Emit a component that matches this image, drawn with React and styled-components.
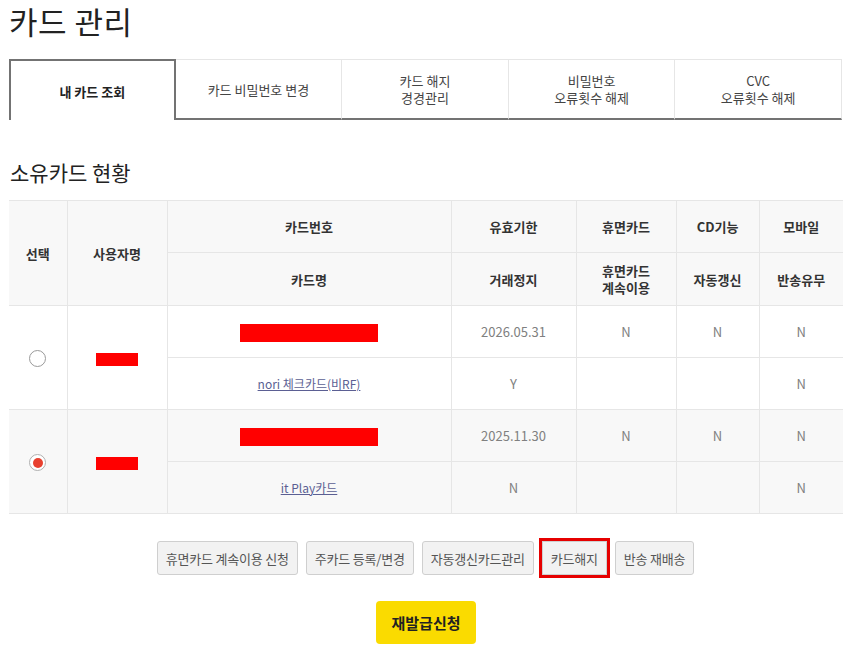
import React from "react";
import styled, { createGlobalStyle } from "styled-components";

const Global = createGlobalStyle`
  html, body { margin: 0; padding: 0; background: #fff; }
  body { font-family: "Noto Sans CJK KR", "Noto Sans", sans-serif; color: #333; }
  * { box-sizing: border-box; }
`;

const Page = styled.div`
  width: 843px;
  padding: 0 1px 0 9px;
`;

const Title = styled.h1`
  margin: 0;
  font-size: 31px;
  line-height: 44px;
  margin-top: -1px;
  font-weight: 400;
  color: #222;
  letter-spacing: 0.5px;
`;

const Tabs = styled.div`
  display: grid;
  grid-template-columns: repeat(5, 1fr);
  margin-top: 16px;
  height: 61px;
`;

const Tab = styled.div`
  display: flex;
  align-items: center;
  justify-content: center;
  text-align: center;
  font-size: 13px;
  line-height: 17px;
  color: ${(p) => (p.$active ? "#222" : "#444")};
  font-weight: ${(p) => (p.$active ? 700 : 400)};
  background: #fff;
  border-top: ${(p) => (p.$active ? "2px solid #737373" : "1px solid #e6e6e6")};
  border-left: ${(p) => (p.$active ? "2px solid #737373" : "none")};
  border-right: ${(p) => (p.$active ? "2px solid #737373" : "1px solid #e6e6e6")};
  border-bottom: ${(p) => (p.$active ? "none" : "2px solid #737373")};
  padding-top: ${(p) => (p.$active ? "2px" : "0")};
`;

const SectionTitle = styled.h2`
  margin: 37px 0 0 1px;
  font-size: 21px;
  line-height: 30px;
  font-weight: 400;
  color: #222;
`;

const Table = styled.table`
  margin-top: 13px;
  width: 834px;
  border-collapse: collapse;
  table-layout: fixed;
  font-size: 13px;
`;

const Th = styled.th`
  background: #f8f8f8;
  border: 1px solid #e6e6e6;
  border-left: ${(p) => (p.$first ? "none" : "1px solid #e6e6e6")};
  border-right: ${(p) => (p.$last ? "none" : "1px solid #e6e6e6")};
  height: ${(p) => p.$h || 52}px;
  font-weight: 700;
  color: #333;
  line-height: 17px;
  padding: 0;
  text-align: center;
`;

const Tr = styled.tr`
  background: ${(p) => (p.$selected ? "#f8f8f8" : "#fff")};
`;

const Td = styled.td`
  border: 1px solid #e6e6e6;
  border-left: ${(p) => (p.$first ? "none" : "1px solid #e6e6e6")};
  border-right: ${(p) => (p.$last ? "none" : "1px solid #e6e6e6")};
  height: 52px;
  text-align: center;
  color: #808080;
  padding: 0;
  font-size: 13px;
`;

const Redact = styled.span`
  display: inline-block;
  vertical-align: middle;
  width: ${(p) => p.$w}px;
  height: ${(p) => p.$h}px;
  background: #ff0000;
`;

const Radio = styled.span`
  display: inline-flex;
  align-items: center;
  justify-content: center;
  width: 17px;
  height: 17px;
  border-radius: 50%;
  border: 1px solid ${(p) => (p.$checked ? "#b0b0b0" : "#9a9a9a")};
  background: #fff;
  vertical-align: middle;
  &::after {
    content: "";
    display: ${(p) => (p.$checked ? "block" : "none")};
    width: 10px;
    height: 10px;
    border-radius: 50%;
    background: #e8402f;
  }
`;

const CardLink = styled.a`
  color: #5b5f93;
  text-decoration: underline;
  font-size: 12px;
  cursor: pointer;
`;

const ButtonRow = styled.div`
  display: flex;
  justify-content: center;
  align-items: center;
  gap: 8px;
  margin-top: 27px;
`;

const GreyButton = styled.button`
  height: 34px;
  padding: 0 8px;
  font-family: inherit;
  font-size: 13px;
  letter-spacing: -0.2px;
  color: #555;
  background: #f2f2f2;
  border: 1px solid #cfcfcf;
  border-radius: ${(p) => (p.$marked ? "0" : "3px")};
  outline: ${(p) => (p.$marked ? "3px solid #e60000" : "none")};
  cursor: pointer;
`;

const PrimaryRow = styled.div`
  display: flex;
  justify-content: center;
  margin-top: 26px;
  padding-left: 1px;
`;

const PrimaryButton = styled.button`
  width: 100px;
  height: 43px;
  background: #fadb00;
  border: none;
  border-radius: 4px;
  font-family: inherit;
  font-size: 15px;
  font-weight: 700;
  color: #222;
  cursor: pointer;
`;

const tabs = [
  ["내 카드 조회"],
  ["카드 비밀번호 변경"],
  ["카드 해지", "경경관리"],
  ["비밀번호", "오류횟수 해제"],
  ["CVC", "오류횟수 해제"],
];

const cards = [
  { exp: "2026.05.31", name: "nori 체크카드(비RF)", stop: "Y", selected: false },
  { exp: "2025.11.30", name: "it Play카드", stop: "N", selected: true },
];

export default function App() {
  return (
    <>
      <Global />
      <Page>
        <Title>카드 관리</Title>
        <Tabs>
          {tabs.map((t, i) => (
            <Tab key={i} $active={i === 0}>
              <div>
                {t.map((line, j) => (
                  <div key={j}>{line}</div>
                ))}
              </div>
            </Tab>
          ))}
        </Tabs>

        <SectionTitle>소유카드 현황</SectionTitle>

        <Table>
          <colgroup>
            <col style={{ width: 58 }} />
            <col style={{ width: 100 }} />
            <col style={{ width: 284 }} />
            <col style={{ width: 125 }} />
            <col style={{ width: 100 }} />
            <col style={{ width: 83 }} />
            <col style={{ width: 84 }} />
          </colgroup>
          <thead>
            <tr>
              <Th rowSpan={2} $first>선택</Th>
              <Th rowSpan={2}>사용자명</Th>
              <Th>카드번호</Th>
              <Th>유효기한</Th>
              <Th>휴면카드</Th>
              <Th>CD기능</Th>
              <Th $last>모바일</Th>
            </tr>
            <tr>
              <Th $h={53}>카드명</Th>
              <Th $h={53}>거래정지</Th>
              <Th $h={53}>
                휴면카드
                <br />
                계속이용
              </Th>
              <Th $h={53}>자동갱신</Th>
              <Th $h={53} $last>반송유무</Th>
            </tr>
          </thead>
          <tbody>
            {cards.map((c, i) => (
              <React.Fragment key={i}>
                <Tr $selected={c.selected}>
                  <Td rowSpan={2} $first>
                    <Radio $checked={c.selected} />
                  </Td>
                  <Td rowSpan={2}>
                    <Redact $w={42} $h={13} />
                  </Td>
                  <Td>
                    <Redact $w={138} $h={18} />
                  </Td>
                  <Td>{c.exp}</Td>
                  <Td>N</Td>
                  <Td>N</Td>
                  <Td $last>N</Td>
                </Tr>
                <Tr $selected={c.selected}>
                  <Td>
                    <CardLink>{c.name}</CardLink>
                  </Td>
                  <Td>{c.stop}</Td>
                  <Td></Td>
                  <Td></Td>
                  <Td $last>N</Td>
                </Tr>
              </React.Fragment>
            ))}
          </tbody>
        </Table>

        <ButtonRow>
          <GreyButton>휴면카드 계속이용 신청</GreyButton>
          <GreyButton>주카드 등록/변경</GreyButton>
          <GreyButton>자동갱신카드관리</GreyButton>
          <GreyButton $marked>카드해지</GreyButton>
          <GreyButton>반송 재배송</GreyButton>
        </ButtonRow>

        <PrimaryRow>
          <PrimaryButton>재발급신청</PrimaryButton>
        </PrimaryRow>
      </Page>
    </>
  );
}
